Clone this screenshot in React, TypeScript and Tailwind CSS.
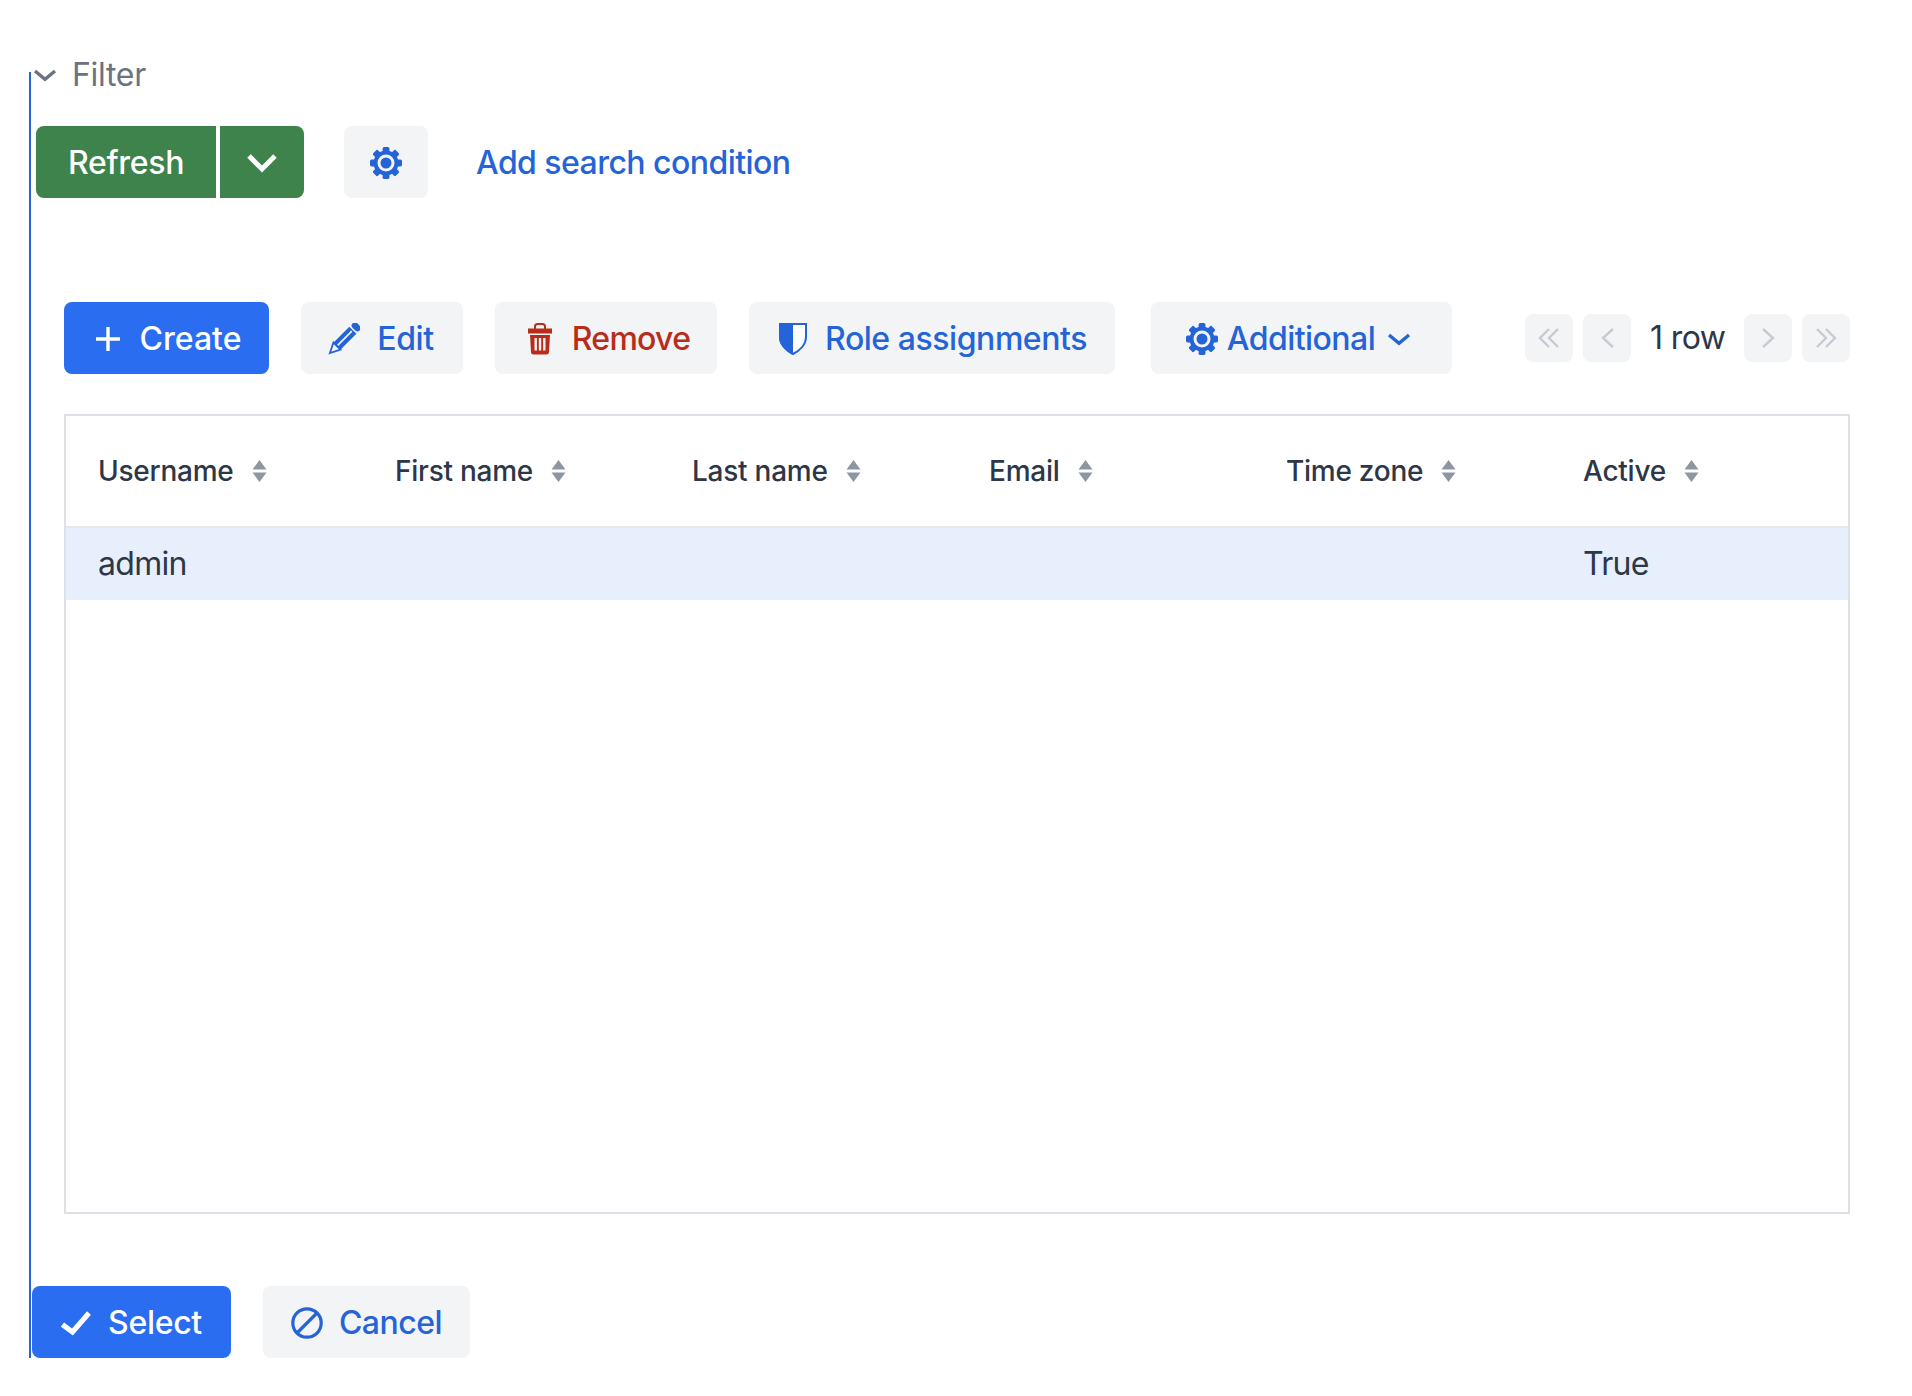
import type { ReactNode } from "react";

const columns = ["Username", "First name", "Last name", "Email", "Time zone", "Active"];

function SortIcon() {
  return (
    <svg width="15" height="22" viewBox="0 0 15 22" className="ml-[18px] shrink-0 fill-[#8f96a3]">
      <path d="M7.5 0 14.5 9.5H.5Z" />
      <path d="M7.5 22 .5 12.5H14.5Z" />
    </svg>
  );
}

function Chevron({ w, h, stroke }: { w: number; h: number; stroke: number }) {
  return (
    <svg width={w} height={h} viewBox={`0 0 ${w} ${h}`} fill="none" stroke="currentColor" strokeWidth={stroke} className="shrink-0">
      <path d={`M${stroke * 0.6} ${stroke * 0.6} ${w / 2} ${h - stroke * 0.8} ${w - stroke * 0.6} ${stroke * 0.6}`} />
    </svg>
  );
}

function Gear({ bg = "#f3f4f6" }: { bg?: string }) {
  return (
    <svg width="32" height="32" viewBox="0 0 32 32" className="shrink-0">
      <g fill="currentColor">
        {[0, 45, 90, 135, 180, 225, 270, 315].map((a) => (
          <rect key={a} x="12.6" y="0" width="6.8" height="8" rx="1.6" transform={`rotate(${a} 16 16)`} />
        ))}
        <circle cx="16" cy="16" r="12.5" />
      </g>
      <circle cx="16" cy="16" r="7" fill="none" stroke={bg} strokeWidth="3" />
    </svg>
  );
}

function PencilIcon() {
  return (
    <svg width="32" height="32" viewBox="0 0 32 32" className="mr-[17px] shrink-0">
      <g transform="rotate(45 16 16)">
        <rect x="11" y="-4.5" width="10" height="6.5" rx="3" fill="currentColor" />
        <rect x="11" y="3.5" width="10" height="23" fill="currentColor" />
        <rect x="15.1" y="5" width="1.8" height="20" fill="#f3f4f6" />
        <path d="M11 26 16 36 21 26Z" fill="#f3f4f6" stroke="currentColor" strokeWidth="1.8" />
      </g>
    </svg>
  );
}

function TrashIcon() {
  return (
    <svg width="24" height="32" viewBox="0 0 24 32" className="mr-5 shrink-0">
      <path d="M7 6V3.5C7 2 8 1 9.5 1H14.5C16 1 17 2 17 3.5V6" fill="none" stroke="currentColor" strokeWidth="2" />
      <rect x="0" y="5.5" width="24" height="5" fill="currentColor" />
      <path d="M2 12H22L21 29C21 30.5 20 31.5 18.5 31.5H5.5C4 31.5 3 30.5 3 29Z" fill="currentColor" />
      <rect x="6.5" y="15" width="2.4" height="12.5" fill="#f3f4f6" />
      <rect x="10.8" y="15" width="2.4" height="12.5" fill="#f3f4f6" />
      <rect x="15.1" y="15" width="2.4" height="12.5" fill="#f3f4f6" />
    </svg>
  );
}

function ShieldIcon() {
  return (
    <svg width="28" height="32" viewBox="0 0 28 32" className="mr-[18px] shrink-0">
      <path d="M1 1H27V14C27 22 20 28 14 31C8 28 1 22 1 14Z" fill="#fff" stroke="currentColor" strokeWidth="2" />
      <path d="M0 0H14V32C7 28 0 22 0 14Z" fill="currentColor" />
    </svg>
  );
}

function DoubleLeft({ flip }: { flip?: boolean }) {
  return (
    <svg width="22" height="20" viewBox="0 0 22 20" fill="none" stroke="currentColor" strokeWidth="2.4" className={flip ? "-scale-x-100" : ""}>
      <path d="M11 1 2 10 11 19" />
      <path d="M20 1 11 10 20 19" />
    </svg>
  );
}

function SingleLeft({ flip }: { flip?: boolean }) {
  return (
    <svg width="13" height="20" viewBox="0 0 13 20" fill="none" stroke="currentColor" strokeWidth="2.4" className={flip ? "-scale-x-100" : ""}>
      <path d="M12 1 2 10 12 19" />
    </svg>
  );
}

function Btn({ className, children }: { className: string; children: ReactNode }) {
  return (
    <button className={`flex h-[72px] items-center justify-center rounded-lg pt-0.5 text-[32px] font-medium ${className}`}>
      {children}
    </button>
  );
}

function PageBtn({ children }: { children: ReactNode }) {
  return <button className="flex h-12 w-12 items-center justify-center rounded-lg bg-[#f3f4f6] text-[#c5cad3]">{children}</button>;
}

export default function App() {
  return (
    <div className="h-[1396px] w-[1912px] bg-white pt-[72px] font-['Inter',sans-serif] text-[#2d3748]">
      <div className="ml-[29px] flex h-[1286px] w-[1850px] flex-col border-l-2 border-[#2563d9]">
        <div className="-mt-[16px] flex h-[38px] items-center text-[32px] tracking-[-0.3px] text-[#6b7280]">
          <span className="ml-[2px] mr-[15px]"><Chevron w={24} h={13} stroke={3.4} /></span>
          Filter
        </div>

        <div className="mt-8 ml-[5px] flex items-center">
          <Btn className="w-[180px] rounded-r-none bg-[#3e824c] tracking-[-0.3px] text-white">Refresh</Btn>
          <Btn className="ml-1 w-[84px] rounded-l-none bg-[#3e824c] text-white">
            <Chevron w={32} h={20} stroke={5} />
          </Btn>
          <Btn className="ml-10 w-[84px] bg-[#f3f4f6] text-[#2563d9]">
            <Gear />
          </Btn>
          <span className="ml-[48px] pt-0.5 text-[32px] font-medium tracking-[-0.55px] text-[#2563d9]">Add search condition</span>
        </div>

        <div className="mt-[104px] ml-[33px] flex items-center">
          <Btn className="w-[205px] bg-[#2a6df0] pl-[4px] text-white">
            <svg width="24" height="24" viewBox="0 0 24 24" stroke="currentColor" strokeWidth="3.4" className="mr-5 shrink-0">
              <path d="M12 0V24M0 12H24" />
            </svg>
            Create
          </Btn>
          <Btn className="ml-8 w-[162px] bg-[#f3f4f6] pr-[2px] tracking-[-0.4px] text-[#2563d9]">
            <PencilIcon />
            Edit
          </Btn>
          <Btn className="ml-8 w-[222px] bg-[#f3f4f6] pl-[6px] tracking-[-0.7px] text-[#b92c1a]">
            <TrashIcon />
            Remove
          </Btn>
          <Btn className="ml-8 w-[366px] bg-[#f3f4f6] pl-0.5 tracking-[-0.45px] text-[#2563d9]">
            <ShieldIcon />
            Role assignments
          </Btn>
          <Btn className="ml-9 w-[301px] bg-[#f3f4f6] pr-[6px] tracking-[-0.55px] text-[#2563d9]">
            <span className="mr-[9px]"><Gear /></span>
            Additional
            <span className="ml-[12px]"><Chevron w={24} h={13} stroke={3.4} /></span>
          </Btn>
          <div className="ml-[73px] flex items-center">
            <PageBtn><DoubleLeft /></PageBtn>
            <div className="ml-[10px]"><PageBtn><SingleLeft /></PageBtn></div>
            <span className="ml-[19px] mr-5 w-[74px] whitespace-nowrap text-[32px] tracking-[-0.6px]">1 row</span>
            <PageBtn><SingleLeft flip /></PageBtn>
            <div className="ml-[10px]"><PageBtn><DoubleLeft flip /></PageBtn></div>
          </div>
        </div>

        <div className="mt-10 ml-[33px] h-[800px] w-[1786px] shrink-0 border-2 border-[#dde1e7]">
          <div className="grid h-[112px] grid-cols-6 items-center border-b-2 border-[#e5e7eb]">
            {columns.map((c) => (
              <div key={c} className="flex items-center pl-8 text-[28px] font-medium tracking-[-0.25px]">
                {c}
                <SortIcon />
              </div>
            ))}
          </div>
          <div className="grid h-[72px] grid-cols-6 items-center bg-[#e7effc] text-[32px] tracking-[-0.7px]">
            <div className="pl-8">admin</div>
            <div /><div /><div /><div />
            <div className="pl-8">True</div>
          </div>
        </div>

        <div className="mt-[72px] ml-[1px] flex items-center">
          <Btn className="w-[199px] bg-[#2a6df0] tracking-[-0.3px] text-white">
            <svg width="30" height="25" viewBox="0 0 30 25" fill="none" stroke="currentColor" strokeWidth="5.2" className="mr-[17px] shrink-0">
              <path d="M1.5 13.5 11.5 21 28 2" />
            </svg>
            Select
          </Btn>
          <Btn className="ml-8 w-[207px] bg-[#f3f4f6] tracking-[-0.5px] text-[#2563d9]">
            <svg width="32" height="32" viewBox="0 0 32 32" fill="none" stroke="currentColor" strokeWidth="3.2" className="mr-4 shrink-0">
              <circle cx="16" cy="16" r="14.2" />
              <path d="M6 26 26 6" />
            </svg>
            Cancel
          </Btn>
        </div>
      </div>
    </div>
  );
}
